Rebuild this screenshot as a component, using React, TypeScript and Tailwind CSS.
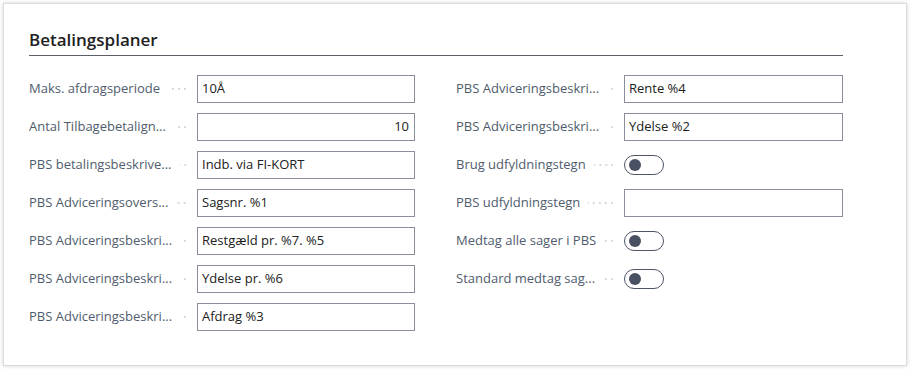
const font = { fontFamily: '"Segoe UI", "Open Sans", sans-serif' };

type Field =
  | { label: string; kind: 'text'; value: string; align?: 'right' }
  | { label: string; kind: 'toggle' };

const leftFields: Field[] = [
  { label: 'Maks. afdragsperiode', kind: 'text', value: '10Å' },
  { label: 'Antal Tilbagebetalign...', kind: 'text', value: '10', align: 'right' },
  { label: 'PBS betalingsbeskrive...', kind: 'text', value: 'Indb. via FI-KORT' },
  { label: 'PBS Adviceringsovers...', kind: 'text', value: 'Sagsnr. %1' },
  { label: 'PBS Adviceringsbeskri...', kind: 'text', value: 'Restgæld pr. %7. %5' },
  { label: 'PBS Adviceringsbeskri...', kind: 'text', value: 'Ydelse pr. %6' },
  { label: 'PBS Adviceringsbeskri...', kind: 'text', value: 'Afdrag %3' },
];

const rightFields: Field[] = [
  { label: 'PBS Adviceringsbeskri...', kind: 'text', value: 'Rente %4' },
  { label: 'PBS Adviceringsbeskri...', kind: 'text', value: 'Ydelse %2' },
  { label: 'Brug udfyldningstegn', kind: 'toggle' },
  { label: 'PBS udfyldningstegn', kind: 'text', value: '' },
  { label: 'Medtag alle sager i PBS', kind: 'toggle' },
  { label: 'Standard medtag sag...', kind: 'toggle' },
];

function Row({ field }: { field: Field }) {
  return (
    <div className="flex items-center h-[28px]">
      <div className="flex items-center w-[168px] shrink-0 pr-[11px]">
        <span className="whitespace-nowrap text-[13px] text-[#505c6d]">{field.label}</span>
        <div className="flex-1 min-w-[2px] ml-[8px] h-[2px] bg-[linear-gradient(to_left,#d9d9d9_2px,transparent_2px)] bg-[length:6px_2px] bg-right" />
      </div>
      {field.kind === 'text' ? (
        <div
          className={`flex-1 h-[28px] border border-[#8a8f9b] bg-white px-[4px] flex items-center text-[13px] text-[#212121] ${
            field.align === 'right' ? 'justify-end pr-[5px]' : ''
          }`}
        >
          {field.value}
        </div>
      ) : (
        <div className="flex-1 flex items-center">
          <div className="w-[40px] h-[20px] rounded-full border border-[#4e5566] bg-white flex items-center pl-[4px]">
            <div className="w-[12px] h-[12px] rounded-full bg-[#4a5063]" />
          </div>
        </div>
      )}
    </div>
  );
}

export default function App() {
  return (
    <div className="w-[912px] h-[370px] bg-white p-[3px]" style={font}>
      <div className="w-[904px] h-[363px] border border-[#dcdcdc] shadow-[0_0_4px_rgba(0,0,0,0.18)] bg-white pl-[25px] pt-[25px]">
        <div className="w-[814px]">
          <h2 className="text-[17px] font-semibold text-[#212121] leading-[22px] pb-[4px] border-b border-[#5a5f66]">
            Betalingsplaner
          </h2>
          <div className="flex gap-[41px] mt-[19px]">
            <div className="flex flex-col gap-[10px] w-[386px]">
              {leftFields.map((f, i) => (
                <Row key={i} field={f} />
              ))}
            </div>
            <div className="flex flex-col gap-[10px] w-[387px]">
              {rightFields.map((f, i) => (
                <Row key={i} field={f} />
              ))}
            </div>
          </div>
        </div>
      </div>
    </div>
  );
}
